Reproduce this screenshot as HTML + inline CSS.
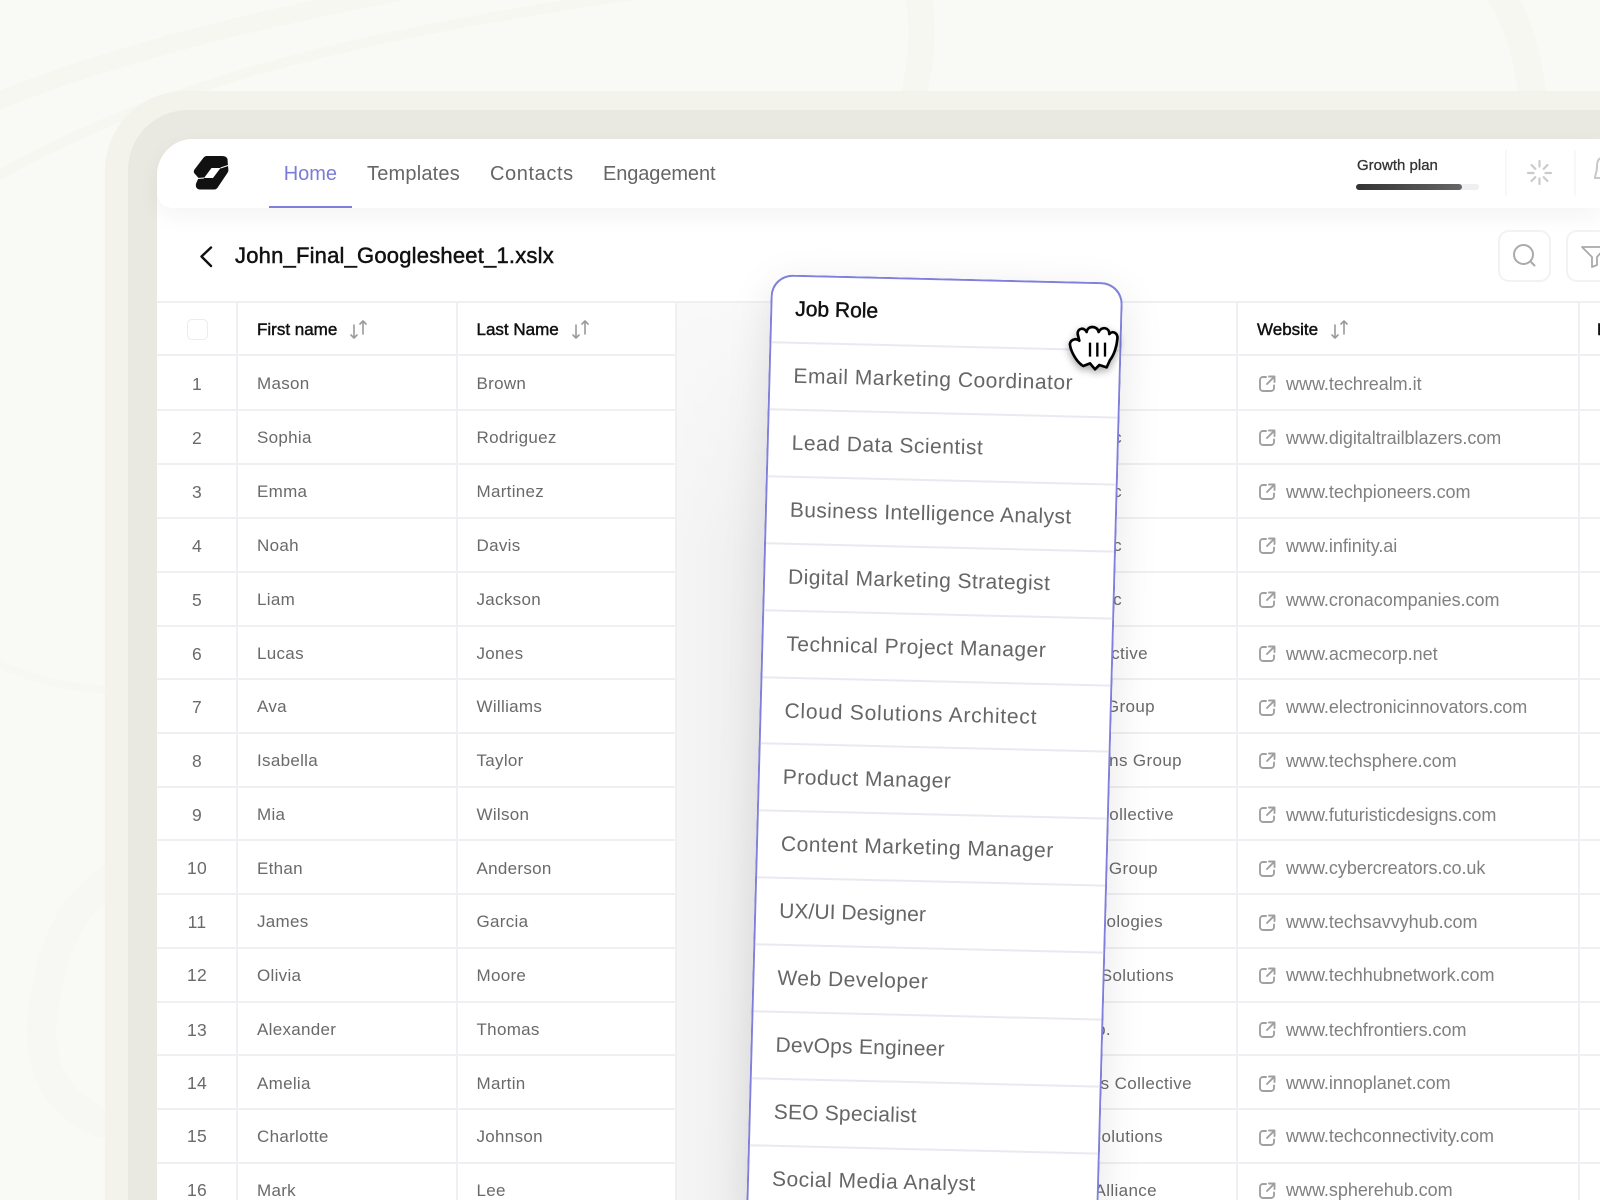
<!DOCTYPE html>
<html><head><meta charset="utf-8"><title>Job Role</title>
<style>
html,body{margin:0;padding:0;width:1600px;height:1200px;overflow:hidden;background:#f9faf5}
body{font-family:"Liberation Sans",sans-serif}
#root{position:relative;width:1600px;height:1200px;overflow:hidden;background:#f9faf5}
.a{position:absolute}
.outer{left:105px;top:91px;width:1495px;height:1109px;background:#f2f1ea;border-radius:80px 0 0 0;opacity:.94}
.inner{left:128px;top:110px;width:1472px;height:1090px;background:#e9e9e2;border-radius:60px 0 0 0}
.card{left:157px;top:139px;width:1443px;height:1061px;background:#fff;border-radius:36px 0 0 0}
.nav{left:157px;top:139px;width:1443px;height:69px;background:#fff;border-radius:36px 0 0 16px;box-shadow:0 8px 22px rgba(40,40,30,.05)}
.nl{top:161px;font-size:20px;line-height:26px;color:#666;white-space:nowrap}
.r{position:absolute;left:157px;width:1443px;height:54px;border-bottom:2px solid #f0f0f4;box-sizing:border-box;font-size:17px;letter-spacing:.3px;color:#6a6a6a;line-height:54.500px;white-space:nowrap;overflow:hidden}
.r span{position:absolute;top:0}
.n{left:0;width:80px;text-align:center;font-size:17.5px}
.f{left:100px}.l{left:319.5px}.w{left:1129px;color:#808080;font-size:18px;letter-spacing:-.03px}
.co{right:calc(1443px - var(--e));letter-spacing:.37px}
.h{top:301px;height:55px;border-top:2px solid #f0f0f4;color:#111;-webkit-text-stroke:.45px #111;line-height:53px;letter-spacing:0}
.v{position:absolute;top:301px;width:2px;height:899px;background:#f0f0f4}
.e{position:absolute;left:1258px;width:18px;height:18px}
.s{position:absolute;top:320px;width:18px;height:19px}
.slot{left:676.5px;top:303px;width:140px;height:897px;background:linear-gradient(180deg,#f9f9f9 0,rgba(249,249,249,0) 28%),linear-gradient(90deg,#f5f5f5,#eeeeee 60%,#e8e8e8)}
.drop{left:0;top:0;width:351.5px;height:940px;box-sizing:border-box;background:#fff;border:2px solid #8080dc;border-bottom:0;border-radius:22px 22px 0 0;transform-origin:0 0;transform:matrix(1,.024,-.02675,1,771.2,274.2);box-shadow:0 12px 44px rgba(0,0,0,.1)}
.i{position:absolute;left:0;right:0;height:66.9px;border-top:2px solid #e9e9f1;box-sizing:border-box;padding-left:23px;font-size:21px;letter-spacing:.5px;color:#666;line-height:66.500px;white-space:nowrap}
</style></head>
<body>
<div id="root">
<svg class="a" style="left:0;top:0" width="1600" height="1200" fill="none" stroke-linecap="round">
<path stroke="#f6f7f1" d="M-10 104C110 55 260 18 410 -10" stroke-width="18"/>
<path stroke="#f6f7f1" d="M-10 180C150 90 320 40 640 -6" stroke-width="10"/>
<path stroke="#f6f7f1" d="M918 -5C925 30 922 65 908 120" stroke-width="26"/>
<path stroke="#f6f7f1" d="M1500 -5C1522 25 1530 70 1536 120" stroke-width="28"/>
<path stroke="#f7f8f3" d="M-5 662C30 680 70 688 110 690" stroke-width="8"/>
<path stroke="#f7f8f3" d="M110 880C70 905 50 950 42 1020C38 1075 62 1115 125 1130" stroke-width="30"/>
</svg>
<div class="a outer"></div>
<div class="a inner"></div>
<div class="a card"></div>
<div class="a nav"></div>

<svg class="a" style="left:0;top:0" width="240" height="200">
<path d="M207 156H222C226 156 228 158 227.6 161L228.4 170C228.5 171 228 172 227.4 173L218 187C217 188.6 216 189.5 214 189.5H200C196.500 189.500 194.800 186 196.500 182.500L198.500 178 195 174C193.500 172.500 193.500 171 194.500 169.500L202.500 159C204 157 205 156 207 156Z" fill="#111"/>
<path d="M211.500 168H220.500L213 178H204Z" fill="#fff"/>
<path d="M220.500 168 228 165.500M204 178 197 178.500" stroke="#fff" stroke-width="1" fill="none"/>
</svg>
<div class="a nl" style="left:283.7px;color:#7c7cd8">Home</div>
<div class="a nl" style="left:367px;letter-spacing:.2px">Templates</div>
<div class="a nl" style="left:490px;letter-spacing:.6px">Contacts</div>
<div class="a nl" style="left:603px;letter-spacing:-.1px">Engagement</div>
<div class="a" style="left:269px;top:206px;width:83px;height:2px;background:#8080dc"></div>

<div class="a" style="left:1357px;top:157px;font-size:15px;line-height:18px;color:#333;-webkit-text-stroke:.3px #333;white-space:nowrap">Growth plan</div>
<div class="a" style="left:1356px;top:184px;width:123px;height:5.5px;border-radius:3px;background:#eeeff3"></div>
<div class="a" style="left:1356px;top:184px;width:106px;height:5.5px;border-radius:3px;background:linear-gradient(90deg,#333,#666)"></div>
<div class="a" style="left:1505px;top:150px;width:1.5px;height:46px;background:#f8f8f8"></div>
<div class="a" style="left:1574px;top:150px;width:1.5px;height:46px;background:#f8f8f8"></div>
<svg class="a" style="left:1525px;top:158px" width="30" height="30" stroke="#cbcbcb" stroke-width="2.2" stroke-linecap="round" fill="none">
<path d="M14.5 3V8.5M14.5 20.5V26M3 15H8.500M20.500 15H26M6.500 7 10.300 10.800M18.700 19.200 22.500 23M22.500 7 18.700 10.800M10.300 19.200 6.500 23"/>
</svg>
<svg class="a" style="left:1590px;top:150px" width="10" height="40" stroke="#c8c8c8" stroke-width="2" fill="none"><path d="M12 8C8 8 7 12 7 17C7 22 5 25 5 28H12"/></svg>

<svg class="a" style="left:190px;top:240px" width="30" height="32" fill="none" stroke="#111" stroke-width="2.4" stroke-linecap="round" stroke-linejoin="round"><path d="M21 7.500 11.500 16.500 21 26"/></svg>
<div class="a" style="left:235px;top:242px;font-size:22px;line-height:28px;letter-spacing:.2px;color:#111;-webkit-text-stroke:.5px #111;white-space:nowrap">John_Final_Googlesheet_1.xslx</div>
<div class="a" style="left:1498px;top:230px;width:53px;height:52px;box-sizing:border-box;border:2px solid #f2f2f4;border-radius:11px"></div>
<div class="a" style="left:1566px;top:230px;width:34px;height:52px;box-sizing:border-box;border:2px solid #f2f2f4;border-right:0;border-radius:11px 0 0 11px"></div>
<svg class="a" style="left:1510px;top:241px" width="30" height="30" fill="none" stroke="#aaa" stroke-width="2" stroke-linecap="round"><circle cx="13.500" cy="13.500" r="9.500"/><path d="M21 21 24.500 24.500"/></svg>
<svg class="a" style="left:1580px;top:242px" width="20" height="28" fill="none" stroke="#aaa" stroke-width="1.800" stroke-linejoin="round"><path d="M2 5H26L17 15V23L12 25V15Z"/></svg>

<svg width="0" height="0" style="position:absolute">
<symbol id="se" viewBox="0 0 18 18"><path d="M8 2H5A3 3 0 0 0 2 5V13A3 3 0 0 0 5 16H13A3 3 0 0 0 16 13V10.500M9 9 16.200 1.800M11 1.500H16.500V7" fill="none" stroke="#a0a0a0" stroke-width="1.900" stroke-linecap="round" stroke-linejoin="round"/></symbol>
<symbol id="ss" viewBox="0 0 18 19"><path d="M4 5V18M1 15 4 18 7 15M13 14V1M10 4 13 1 16 4" fill="none" stroke="#9a9a9a" stroke-width="1.600" stroke-linecap="round" stroke-linejoin="round"/></symbol>
</svg>

<div class="r h" style="left:157px">
<span class="f">First name</span><span class="l">Last Name</span><span style="left:1100px">Website</span><span style="left:1440px">Phone</span>
</div>
<div class="a" style="left:187px;top:319px;width:21px;height:21px;box-sizing:border-box;border:1.500px solid #ebecf0;border-radius:5px;background:#fff"></div>
<svg class="s" style="left:350px"><use href="#ss"/></svg>
<svg class="s" style="left:572px"><use href="#ss"/></svg>
<svg class="s" style="left:1331px"><use href="#ss"/></svg>

<div class="r" style="top:356.500px"><span class="n">1</span><span class="f">Mason</span><span class="l">Brown</span><span class="co" style="--e:963px">Tech Realm Inc</span><span class="w">www.techrealm.it</span></div>
<div class="r" style="top:410.500px"><span class="n">2</span><span class="f">Sophia</span><span class="l">Rodriguez</span><span class="co" style="--e:965px">Trailblazers Inc</span><span class="w">www.digitaltrailblazers.com</span></div>
<div class="r" style="top:464.500px"><span class="n">3</span><span class="f">Emma</span><span class="l">Martinez</span><span class="co" style="--e:965px">Tech Pioneers Inc</span><span class="w">www.techpioneers.com</span></div>
<div class="r" style="top:518.500px"><span class="n">4</span><span class="f">Noah</span><span class="l">Davis</span><span class="co" style="--e:965px">Infinity Labs Inc</span><span class="w">www.infinity.ai</span></div>
<div class="r" style="top:572.500px"><span class="n">5</span><span class="f">Liam</span><span class="l">Jackson</span><span class="co" style="--e:965px">Crona Companies Inc</span><span class="w">www.cronacompanies.com</span></div>
<div class="r" style="top:626.500px;height:53.700px;line-height:54px"><span class="n">6</span><span class="f">Lucas</span><span class="l">Jones</span><span class="co" style="--e:991px">Acme Collective</span><span class="w">www.acmecorp.net</span></div>
<div class="r" style="top:680.200px;height:53.800px;line-height:54px"><span class="n">7</span><span class="f">Ava</span><span class="l">Williams</span><span class="co" style="--e:998px">Innovators Group</span><span class="w">www.electronicinnovators.com</span></div>
<div class="r" style="top:734px;height:53.700px;line-height:54px"><span class="n">8</span><span class="f">Isabella</span><span class="l">Taylor</span><span class="co" style="--e:1025px">Tech Solutions Group</span><span class="w">www.techsphere.com</span></div>
<div class="r" style="top:787.700px;height:53.800px;line-height:54px"><span class="n">9</span><span class="f">Mia</span><span class="l">Wilson</span><span class="co" style="--e:1017px">Futuristic Collective</span><span class="w">www.futuristicdesigns.com</span></div>
<div class="r" style="top:841.500px;height:53.700px;line-height:53.500px"><span class="n">10</span><span class="f">Ethan</span><span class="l">Anderson</span><span class="co" style="--e:1001px">Cyber Creators Group</span><span class="w">www.cybercreators.co.uk</span></div>
<div class="r" style="top:895.200px;height:53.800px;line-height:54px"><span class="n">11</span><span class="f">James</span><span class="l">Garcia</span><span class="co" style="--e:1006px">Savvy Technologies</span><span class="w">www.techsavvyhub.com</span></div>
<div class="r" style="top:949px;height:53.700px;line-height:53.500px"><span class="n">12</span><span class="f">Olivia</span><span class="l">Moore</span><span class="co" style="--e:1017px">Network Solutions</span><span class="w">www.techhubnetwork.com</span></div>
<div class="r" style="top:1002.700px;height:53.800px;line-height:54px"><span class="n">13</span><span class="f">Alexander</span><span class="l">Thomas</span><span class="co" style="--e:954px">Frontiers Corp.</span><span class="w">www.techfrontiers.com</span></div>
<div class="r" style="top:1056.500px;height:53.700px;line-height:53.500px"><span class="n">14</span><span class="f">Amelia</span><span class="l">Martin</span><span class="co" style="--e:1035px">Innoplanets Collective</span><span class="w">www.innoplanet.com</span></div>
<div class="r" style="top:1110.200px;height:53.800px;line-height:53.500px"><span class="n">15</span><span class="f">Charlotte</span><span class="l">Johnson</span><span class="co" style="--e:1006px">Connect Solutions</span><span class="w">www.techconnectivity.com</span></div>
<div class="r" style="top:1164px;height:36px;border-bottom:0;line-height:53.500px"><span class="n">16</span><span class="f">Mark</span><span class="l">Lee</span><span class="co" style="--e:1000px">Sphere Alliance</span><span class="w">www.spherehub.com</span></div>

<svg class="e" style="top:375px"><use href="#se"/></svg>
<svg class="e" style="top:429px"><use href="#se"/></svg>
<svg class="e" style="top:483px"><use href="#se"/></svg>
<svg class="e" style="top:537px"><use href="#se"/></svg>
<svg class="e" style="top:591px"><use href="#se"/></svg>
<svg class="e" style="top:645px"><use href="#se"/></svg>
<svg class="e" style="top:698.500px"><use href="#se"/></svg>
<svg class="e" style="top:752px"><use href="#se"/></svg>
<svg class="e" style="top:806px"><use href="#se"/></svg>
<svg class="e" style="top:859.500px"><use href="#se"/></svg>
<svg class="e" style="top:913.500px"><use href="#se"/></svg>
<svg class="e" style="top:967px"><use href="#se"/></svg>
<svg class="e" style="top:1021px"><use href="#se"/></svg>
<svg class="e" style="top:1074.500px"><use href="#se"/></svg>
<svg class="e" style="top:1128.500px"><use href="#se"/></svg>
<svg class="e" style="top:1182px;height:18px"><use href="#se"/></svg>

<div class="v" style="left:236px"></div>
<div class="v" style="left:455.500px"></div>
<div class="v" style="left:674.500px"></div>
<div class="v" style="left:1236px"></div>
<div class="v" style="left:1578px"></div>

<div class="a slot"></div>

<div class="a drop">
<div style="position:absolute;left:23px;top:0;line-height:65px;font-size:21px;color:#111;-webkit-text-stroke:.45px #111;white-space:nowrap">Job Role</div>
<div class="i" style="top:65px">Email Marketing Coordinator</div>
<div class="i" style="top:131.900px">Lead Data Scientist</div>
<div class="i" style="top:198.800px;letter-spacing:.37px">Business Intelligence Analyst</div>
<div class="i" style="top:265.700px;letter-spacing:.4px">Digital Marketing Strategist</div>
<div class="i" style="top:332.600px">Technical Project Manager</div>
<div class="i" style="top:399.500px;letter-spacing:.77px">Cloud Solutions Architect</div>
<div class="i" style="top:466.400px">Product Manager</div>
<div class="i" style="top:533.300px">Content Marketing Manager</div>
<div class="i" style="top:600.200px;letter-spacing:.07px">UX/UI Designer</div>
<div class="i" style="top:667.100px">Web Developer</div>
<div class="i" style="top:734px;letter-spacing:.23px">DevOps Engineer</div>
<div class="i" style="top:800.900px;letter-spacing:.2px">SEO Specialist</div>
<div class="i" style="top:867.800px">Social Media Analyst</div>
</div>

<svg class="a" style="left:1040px;top:310px;filter:drop-shadow(0 3px 4px rgba(0,0,0,.35))" width="90" height="70" viewBox="0 0 270 210">
<path d="M125 165C105 150 92 120 90 105C88 92 105 82 118 92L113 72C112 55 132 50 140 66C142 46 172 46 176 66C185 48 208 52 208 72C218 60 235 70 232 88C230 110 222 135 210 150L200 172L178 165L165 178L150 160L130 168Z" fill="#fff" stroke="#000" stroke-width="8" stroke-linejoin="round"/>
<path d="M150 98V140M172 98V140M195 98V140" stroke="#000" stroke-width="7" fill="none"/>
</svg>
</div>
</body></html>
